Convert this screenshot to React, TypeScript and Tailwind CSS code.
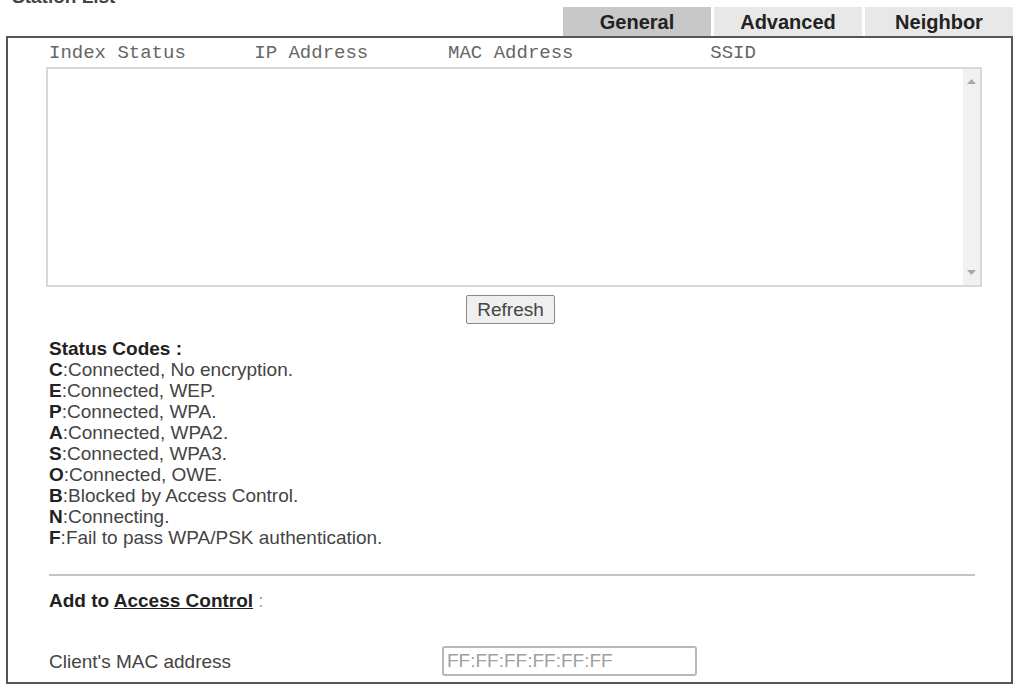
const codes: [string, string][] = [
  ['C', 'Connected, No encryption.'],
  ['E', 'Connected, WEP.'],
  ['P', 'Connected, WPA.'],
  ['A', 'Connected, WPA2.'],
  ['S', 'Connected, WPA3.'],
  ['O', 'Connected, OWE.'],
  ['B', 'Blocked by Access Control.'],
  ['N', 'Connecting.'],
  ['F', 'Fail to pass WPA/PSK authentication.'],
]

const tabs = [
  { label: 'General', active: true },
  { label: 'Advanced', active: false },
  { label: 'Neighbor', active: false },
]

export default function App() {
  return (
    <div className="w-[1015px] h-[685px] overflow-hidden bg-white text-[#333] font-['Liberation_Sans',Arial,sans-serif]">
      {/* Page title, cut by the top edge */}
      <div className="flow-root h-[7px] pl-[12px]">
        <div className="-mt-[14px] text-[19px] leading-[21px] font-bold text-[#444]">Station List</div>
      </div>

      {/* Tabs */}
      <div className="flex justify-end gap-[3px] pr-[2px]">
        {tabs.map((t) => (
          <div
            key={t.label}
            className={`w-[148px] h-[29px] flex items-center justify-center text-[20px] font-bold text-[#222] ${
              t.active ? 'bg-[#c8c8c8]' : 'bg-[#e8e8e8]'
            }`}
          >
            {t.label}
          </div>
        ))}
      </div>

      {/* Main panel */}
      <div className="ml-[6px] w-[1007px] h-[648px] border-2 border-[#555]">
        <div className="ml-[38px] w-[936px]">
          {/* Column header */}
          <div className="pt-[4px] h-[29px] pl-[3px] whitespace-pre font-['Liberation_Mono','Courier_New',monospace] text-[19px] leading-[22px] text-[#666]">
            {'Index Status      IP Address       MAC Address            SSID'}
          </div>

          {/* List box */}
          <div className="h-[220px] flex border-2 border-[#d8d8d8] bg-white">
            <div className="flex-1" />
            <div className="w-[17px] bg-[#f1f1f1] flex flex-col items-center justify-between py-[10px]">
              <svg width="9" height="5" viewBox="0 0 9 5">
                <path d="M0 5 L4.5 0 L9 5 Z" fill="#a8a8a8" />
              </svg>
              <svg width="9" height="5" viewBox="0 0 9 5">
                <path d="M0 0 L4.5 5 L9 0 Z" fill="#a8a8a8" />
              </svg>
            </div>
          </div>

          {/* Refresh */}
          <div className="mt-[8px] ml-[420px]">
            <button className="w-[89px] h-[29px] bg-[#efefef] border border-[#8a8a8a] rounded-[2px] text-[19px] leading-[21px] text-[#444] font-['Liberation_Sans',Arial,sans-serif]">
              Refresh
            </button>
          </div>

          {/* Status codes */}
          <div className="mt-[14px] pl-[3px] text-[19px] leading-[21px]">
            <div className="font-bold text-[#222]">Status Codes :</div>
            {codes.map(([k, v]) => (
              <div key={k} className="text-[#444]">
                <span className="font-bold text-[#222]">{k}</span>:{v}
              </div>
            ))}
          </div>

          <div className="mt-[26px] ml-[3px] mr-[7px] h-[2px] bg-[#c4c4c4]" />

          {/* Access control */}
          <div className="mt-[14px] pl-[3px] text-[19px] leading-[21px]">
            <span className="font-bold text-[#222]">
              Add to <span className="underline">Access Control</span>
            </span>
            <span className="text-[#999]"> :</span>
          </div>

          <div className="mt-[35px] flex items-center h-[30px] pl-[3px]">
            <div className="w-[393px] text-[19px] leading-[21px] text-[#444]">Client's MAC address</div>
            <input
              className="w-[255px] h-[30px] border-2 border-[#b8b8b8] rounded-[3px] px-[3px] text-[19px] text-[#999] placeholder:text-[#a0a0a0] font-['Liberation_Sans',Arial,sans-serif] outline-none"
              placeholder="FF:FF:FF:FF:FF:FF"
            />
          </div>
        </div>
      </div>
    </div>
  )
}
